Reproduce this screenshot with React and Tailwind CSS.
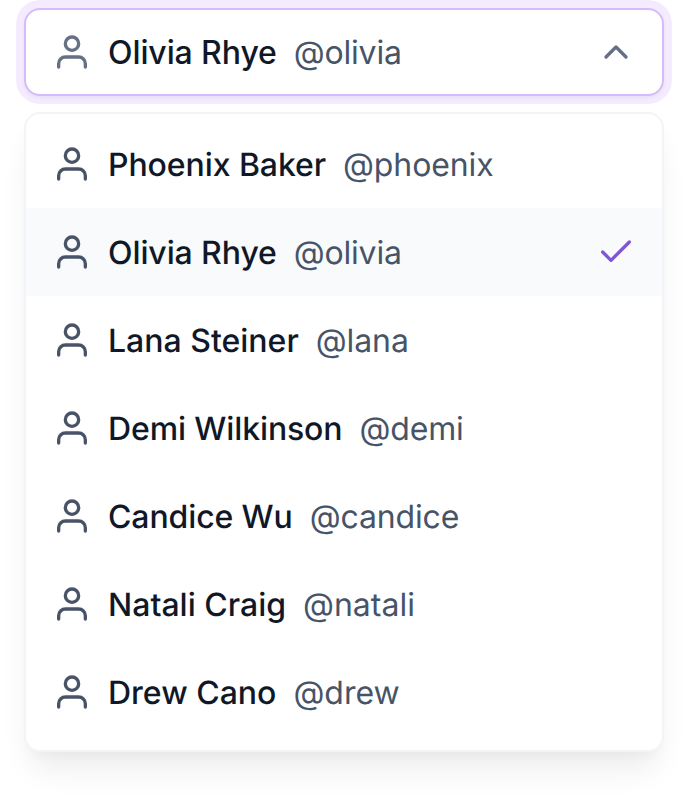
const people = [
  ['Phoenix Baker', '@phoenix', 'tracking-[-0.08px]', 'tracking-[-0.12px]'],
  ['Olivia Rhye', '@olivia', 'tracking-[-0.1px]', 'tracking-[-0.2px]'],
  ['Lana Steiner', '@lana', 'tracking-normal', 'tracking-[-0.1px]'],
  ['Demi Wilkinson', '@demi', 'tracking-[-0.12px]', 'tracking-[-0.16px]'],
  ['Candice Wu', '@candice', 'tracking-[-0.12px]', 'tracking-[-0.14px]'],
  ['Natali Craig', '@natali', 'tracking-normal', 'tracking-normal'],
  ['Drew Cano', '@drew', 'tracking-normal', 'tracking-normal'],
];

function UserIcon({ className }) {
  return (
    <svg className={className} width="40" height="40" viewBox="0 0 20 20" fill="none" stroke="currentColor" strokeWidth="1.66667" strokeLinecap="round" strokeLinejoin="round">
      <path d="M16.6667 17.5V15.8333C16.6667 14.9493 16.3155 14.1014 15.6904 13.4763C15.0652 12.8512 14.2174 12.5 13.3333 12.5H6.66668C5.78262 12.5 4.93478 12.8512 4.30965 13.4763C3.68453 14.1014 3.33334 14.9493 3.33334 15.8333V17.5" />
      <circle cx="10" cy="5.83333" r="3.33333" />
    </svg>
  );
}

function Person({ person, iconClass }) {
  const [name, handle, nameTracking, handleTracking] = person;
  return (
    <>
      <UserIcon className={iconClass} />
      <span className={`ml-4 pt-0.5 font-medium text-[#101828] ${nameTracking}`}>{name}</span>
      <span className={`ml-[17px] pt-0.5 text-[#475467] ${handleTracking}`}>{handle}</span>
    </>
  );
}

export default function App() {
  return (
    <div className="h-[800px] w-[688px] overflow-hidden bg-white px-6 pt-2 font-['Inter',sans-serif] text-[32px] leading-[48px] [text-rendering:geometricPrecision]">
      <button type="button" className="flex h-22 w-full items-center rounded-2xl border-2 border-[#d6bbfb] bg-white px-[26px] shadow-[0_2px_4px_rgba(16,24,40,0.05),0_0_0_8px_#f4ebff]">
        <Person person={people[1]} iconClass="text-[#667085]" />
        <svg className="ml-auto text-[#667085]" width="40" height="40" viewBox="0 0 20 20" fill="none" stroke="currentColor" strokeWidth="1.66667" strokeLinecap="round" strokeLinejoin="round">
          <path d="M15 12.5L10 7.5L5 12.5" />
        </svg>
      </button>
      <ul className="mt-4 h-[640px] overflow-hidden rounded-2xl border-2 border-[#f2f4f7] bg-white py-1.5 shadow-[0_24px_32px_-8px_rgba(0,0,0,0.08),0_8px_12px_-4px_rgba(0,0,0,0.03)]">
        {people.map((person, index) => (
          <li key={person[0]} className={`flex h-22 items-center px-[26px] ${index === 1 ? 'bg-[#f9fafb]' : ''}`}>
            <Person person={person} iconClass="text-[#475467]" />
            {index === 1 && (
              <svg className="ml-auto text-[#7f56d9]" width="40" height="40" viewBox="0 0 20 20" fill="none" stroke="currentColor" strokeWidth="1.66667" strokeLinecap="round" strokeLinejoin="round">
                <path d="M16.6667 5L7.50004 14.1667L3.33337 10" />
              </svg>
            )}
          </li>
        ))}
      </ul>
    </div>
  );
}
